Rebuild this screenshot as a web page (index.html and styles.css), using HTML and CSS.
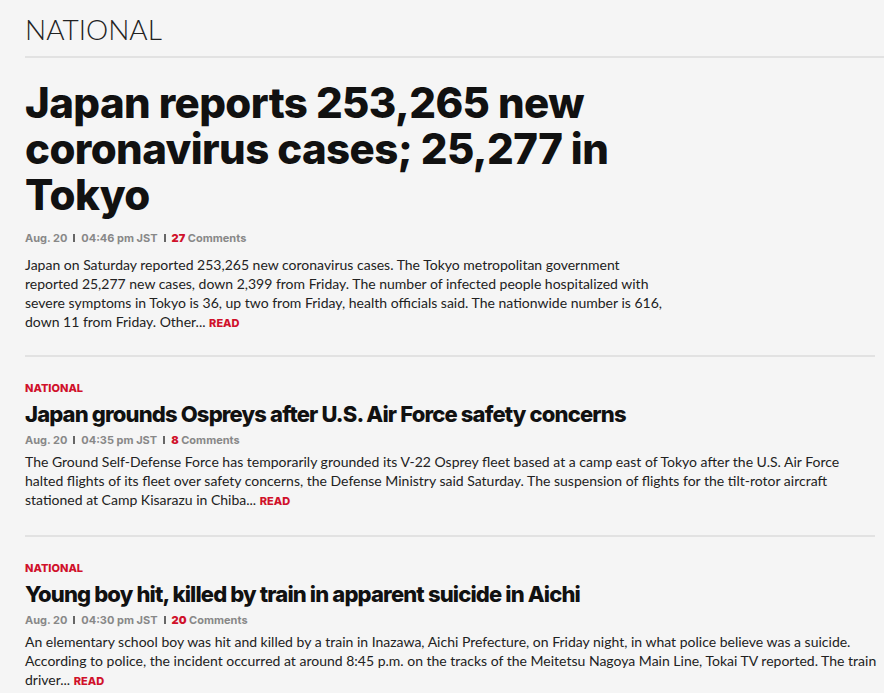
FILE: index.html
```html
<!DOCTYPE html>
<html lang="en">
<head>
    <meta charset="UTF-8">
    <title>National</title>
    <link rel="stylesheet" href="styles.css">
</head>
<body>
    <header class="section-head">
        <h1>NATIONAL</h1>
    </header>

    <div class="news-list">
        <!-- Lead story -->
        <article class="story lead">
            <h2 class="story-title"><a href="#">Japan reports 253,265 new coronavirus cases; 25,277 in Tokyo</a></h2>
            <div class="story-meta">
                <span>Aug. 20</span><span class="sep"></span><span>04:46 pm JST</span><span class="sep"></span><span><b class="count">27</b> Comments</span>
            </div>
            <p class="story-summary">Japan on Saturday reported 253,265 new coronavirus cases. The Tokyo metropolitan government reported 25,277 new cases, down 2,399 from Friday. The number of infected people hospitalized with severe symptoms in Tokyo is 36, up two from Friday, health officials said. The nationwide number is 616, down 11 from Friday. Other... <a class="read" href="#">READ</a></p>
        </article>

        <article class="story">
            <div class="story-cat">NATIONAL</div>
            <h3 class="story-title"><a href="#">Japan grounds Ospreys after U.S. Air Force safety concerns</a></h3>
            <div class="story-meta">
                <span>Aug. 20</span><span class="sep"></span><span>04:35 pm JST</span><span class="sep"></span><span><b class="count">8</b> Comments</span>
            </div>
            <p class="story-summary">The Ground Self-Defense Force has temporarily grounded its V-22 Osprey fleet based at a camp east of Tokyo after the U.S. Air Force halted flights of its fleet over safety concerns, the Defense Ministry said Saturday. The suspension of flights for the tilt-rotor aircraft stationed at Camp Kisarazu in Chiba... <a class="read" href="#">READ</a></p>
        </article>

        <article class="story">
            <div class="story-cat">NATIONAL</div>
            <h3 class="story-title"><a href="#">Young boy hit, killed by train in apparent suicide in Aichi</a></h3>
            <div class="story-meta">
                <span>Aug. 20</span><span class="sep"></span><span>04:30 pm JST</span><span class="sep"></span><span><b class="count">20</b> Comments</span>
            </div>
            <p class="story-summary">An elementary school boy was hit and killed by a train in Inazawa, Aichi Prefecture, on Friday night, in what police believe was a suicide. According to police, the incident occurred at around 8:45 p.m. on the tracks of the Meitetsu Nagoya Main Line, Tokai TV reported. The train driver... <a class="read" href="#">READ</a></p>
        </article>
    </div>
</body>
</html>
```

FILE: styles.css
```css
body {
    margin: 0;
    background-color: #f5f5f5;
    font-family: 'Lato', 'Liberation Sans', sans-serif;
    color: #222;
}

a {
    color: inherit;
    text-decoration: none;
}

/* Section heading */
.section-head {
    padding: 12px 0 0 25px;
}
.section-head h1 {
    margin: 0;
    padding-bottom: 10px;
    font-size: 28px;
    font-weight: 300;
    line-height: 34px;
    color: #222;
    border-bottom: 2px solid #e2e2e2;
}

/* Story list */
.news-list {
    padding: 0 9px 0 25px;
}
.story {
    padding: 24px 0 26px;
    border-bottom: 2px solid #e2e2e2;
}
.story.lead {
    padding: 22px 0 24px;
}

.story-cat {
    font-family: 'Inter', 'Liberation Sans', sans-serif;
    font-size: 11px;
    line-height: 14px;
    font-weight: 800;
    color: #d0112b;
}

.story-title {
    margin: 6px 0 0;
    font-family: 'Inter', 'Liberation Sans', sans-serif;
    font-size: 22px;
    line-height: 26px;
    font-weight: 800;
    color: #111;
    letter-spacing: -0.85px;
}
.lead .story-title {
    margin: 0;
    max-width: 620px;
    font-size: 42px;
    line-height: 46px;
    letter-spacing: -0.6px;
}

.story-meta {
    margin-top: 6px;
    font-family: 'Inter', 'Liberation Sans', sans-serif;
    font-size: 11px;
    line-height: 14px;
    font-weight: 700;
    color: #888;
    display: flex;
    align-items: center;
}
.lead .story-meta {
    margin-top: 13px;
}
.story-meta .sep {
    display: inline-block;
    width: 2px;
    height: 8px;
    background-color: #666;
    margin: 0 6px;
}
.story-meta .count {
    color: #d0112b;
}

.story-summary {
    margin: 5px -2px 0 0;
    font-size: 14px;
    line-height: 19px;
    color: #222;
}
.lead .story-summary {
    margin-top: 10px;
    max-width: 650px;
}

.read {
    font-family: 'Inter', 'Liberation Sans', sans-serif;
    font-size: 11px;
    line-height: 1;
    font-weight: 800;
    color: #d0112b;
}
```
